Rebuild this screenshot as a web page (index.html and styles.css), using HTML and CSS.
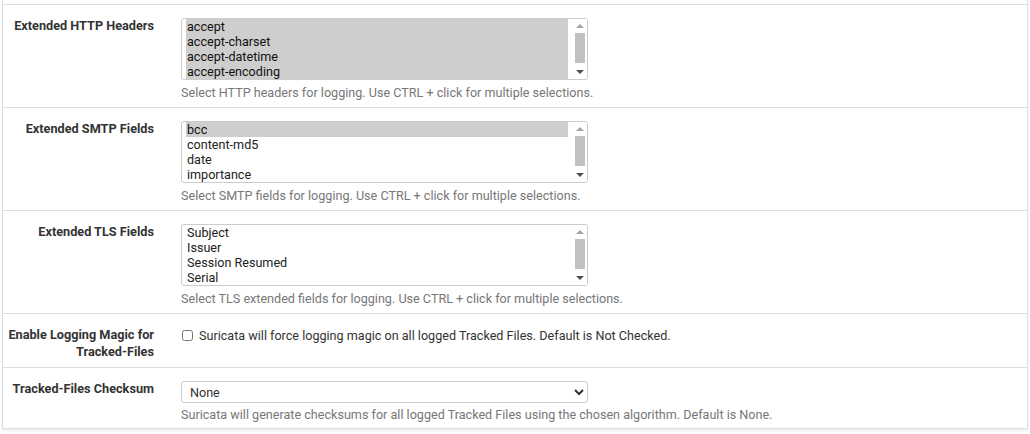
FILE: index.html
```html
<!DOCTYPE html>
<html>
<head>
<meta charset="utf-8">
<link rel="stylesheet" href="styles.css">
</head>
<body>
<div class="panel">
  <div class="prev"></div>
  <div class="row">
    <div class="label">Extended HTTP Headers</div>
    <div class="field">
      <div class="listbox" role="listbox" aria-multiselectable="true">
        <div class="opts">
          <div class="opt sel" role="option">accept</div>
          <div class="opt sel" role="option">accept-charset</div>
          <div class="opt sel" role="option">accept-datetime</div>
          <div class="opt sel" role="option">accept-encoding</div>
        </div>
        <div class="sbar">
          <span class="btn up"></span>
          <span class="track"><span class="thumb"></span></span>
          <span class="btn down"></span>
        </div>
      </div>
      <div class="help">Select HTTP headers for logging. Use CTRL + click for multiple selections.</div>
    </div>
  </div>
  <div class="row">
    <div class="label">Extended SMTP Fields</div>
    <div class="field">
      <div class="listbox" role="listbox" aria-multiselectable="true">
        <div class="opts">
          <div class="opt sel" role="option">bcc</div>
          <div class="opt" role="option">content-md5</div>
          <div class="opt" role="option">date</div>
          <div class="opt" role="option">importance</div>
        </div>
        <div class="sbar">
          <span class="btn up"></span>
          <span class="track"><span class="thumb"></span></span>
          <span class="btn down"></span>
        </div>
      </div>
      <div class="help">Select SMTP fields for logging. Use CTRL + click for multiple selections.</div>
    </div>
  </div>
  <div class="row">
    <div class="label">Extended TLS Fields</div>
    <div class="field">
      <div class="listbox" role="listbox" aria-multiselectable="true">
        <div class="opts">
          <div class="opt" role="option">Subject</div>
          <div class="opt" role="option">Issuer</div>
          <div class="opt" role="option">Session Resumed</div>
          <div class="opt" role="option">Serial</div>
        </div>
        <div class="sbar">
          <span class="btn up"></span>
          <span class="track"><span class="thumb"></span></span>
          <span class="btn down"></span>
        </div>
      </div>
      <div class="help">Select TLS extended fields for logging. Use CTRL + click for multiple selections.</div>
    </div>
  </div>
  <div class="row">
    <div class="label">Enable Logging Magic for Tracked-Files</div>
    <div class="field">
      <label class="check"><input type="checkbox"> Suricata will force logging magic on all logged Tracked Files. Default is Not Checked.</label>
    </div>
  </div>
  <div class="row last">
    <div class="label">Tracked-Files Checksum</div>
    <div class="field">
      <select class="drop">
        <option>None</option>
        <option>MD5</option>
        <option>SHA1</option>
        <option>SHA256</option>
      </select>
      <div class="help">Suricata will generate checksums for all logged Tracked Files using the chosen algorithm. Default is None.</div>
    </div>
  </div>
</div>
</body>
</html>
```
FILE: styles.css
```css
html, body {
  margin: 0;
  padding: 0;
  background: #ffffff;
}
body {
  font-family: Roboto, "Liberation Sans", Arial, sans-serif;
  color: #333333;
  font-size: 12.6px;
}
.panel {
  margin: 0 2px 4px 2px;
  border-left: 1px solid #dddddd;
  border-right: 1px solid #dddddd;
  border-bottom: 1px solid #dddddd;
  box-shadow: 0 2px 2px rgba(0, 0, 0, 0.08);
}
.prev {
  height: 4px;
}
.row {
  display: grid;
  grid-template-columns: 178px 1fr;
  border-top: 1px solid #dddddd;
  padding: 13px 0 6px 0;
}
.row.last {
  padding-bottom: 5px;
}
.label {
  font-weight: 700;
  font-size: 12.7px;
  line-height: 17px;
  text-align: right;
  padding: 0 27px 0 4px;
  margin-top: -1px;
  margin-bottom: 1px;
  color: #333333;
}
.field {
  display: flex;
  flex-direction: column;
  align-items: flex-start;
}
.listbox {
  width: 407px;
  height: 62px;
  box-sizing: border-box;
  border: 1px solid #cccccc;
  border-radius: 3px;
  padding: 0 0 0 4px;
  display: flex;
  background: #ffffff;
  overflow: hidden;
}
.opts {
  flex: 1;
  margin-right: 5px;
  display: flex;
  flex-direction: column;
}
.opt {
  height: 15px;
  line-height: 15px;
  padding: 0 1px;
  font-size: 12.6px;
  color: #222222;
  white-space: nowrap;
}
.opt.sel {
  background: #cecece;
  color: #111111;
}
.sbar {
  width: 14px;
  display: flex;
  flex-direction: column;
  background: #ffffff;
}
.btn {
  height: 14px;
  display: flex;
  align-items: center;
  justify-content: center;
}
.btn::before {
  content: "";
  width: 0;
  height: 0;
  border-left: 4px solid transparent;
  border-right: 4px solid transparent;
}
.up::before {
  border-bottom: 4px solid #a3a3a3;
}
.down::before {
  border-top: 4px solid #505050;
}
.track {
  flex: 1;
  display: flex;
  flex-direction: column;
  padding: 0 2px 2px 2px;
}
.thumb {
  height: 30px;
  background: #c1c1c1;
}
.drop {
  width: 407px;
  height: 22px;
  box-sizing: border-box;
  border: 1px solid #cccccc;
  border-radius: 3px;
  padding: 0 6px 0 4px;
  margin: 0;
  font-family: Roboto, "Liberation Sans", Arial, sans-serif;
  font-size: 12.6px;
  color: #333333;
  background: #ffffff;
}
.help {
  margin-top: 5px;
  font-size: 12.6px;
  line-height: 16px;
  color: #777777;
}
.row.last .help {
  margin-top: 4px;
}
.check {
  display: flex;
  align-items: center;
  font-size: 12.6px;
  line-height: 17px;
  color: #333333;
}
.check input {
  margin: 0 6px 0 1px;
  width: 11px;
  height: 11px;
}
```
